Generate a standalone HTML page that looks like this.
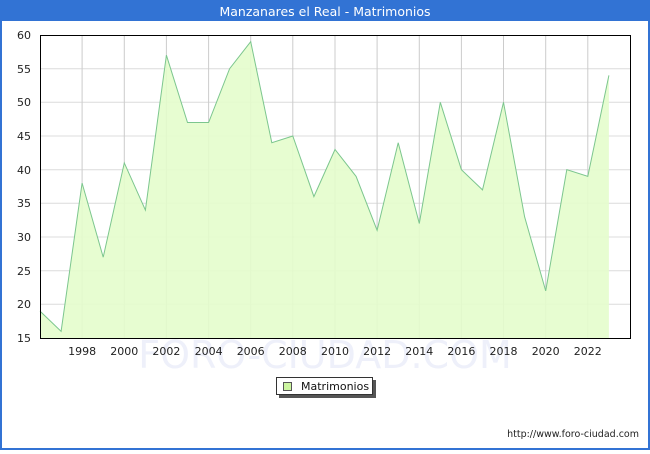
<!DOCTYPE html>
<html><head><style>
body{margin:0;width:650px;height:450px;overflow:hidden;font-family:"DejaVu Sans","Liberation Sans",sans-serif;}
</style></head><body>
<svg width="650" height="450" xmlns="http://www.w3.org/2000/svg" font-family="DejaVu Sans, Liberation Sans, sans-serif">
<rect x="0" y="0" width="650" height="450" fill="#3273d4"/>
<rect x="2" y="21" width="646" height="427" fill="#fff"/>
<text x="325" y="16" fill="#fff" font-size="12.5" text-anchor="middle">Manzanares el Real - Matrimonios</text>
<text x="325" y="368" fill="#eef0fa" font-size="38" text-anchor="middle">FORO-CIUDAD.COM</text>
<g stroke="#dcdcdc" stroke-width="1">
<line x1="40" x2="630" y1="68.7" y2="68.7"/><line x1="40" x2="630" y1="102.3" y2="102.3"/><line x1="40" x2="630" y1="136" y2="136"/><line x1="40" x2="630" y1="169.7" y2="169.7"/><line x1="40" x2="630" y1="203.3" y2="203.3"/><line x1="40" x2="630" y1="237" y2="237"/><line x1="40" x2="630" y1="270.7" y2="270.7"/><line x1="40" x2="630" y1="304.3" y2="304.3"/>
</g>
<g stroke="#cccccc" stroke-width="1">
<line x1="82.1" x2="82.1" y1="35" y2="338"/><line x1="124.3" x2="124.3" y1="35" y2="338"/><line x1="166.4" x2="166.4" y1="35" y2="338"/><line x1="208.6" x2="208.6" y1="35" y2="338"/><line x1="250.7" x2="250.7" y1="35" y2="338"/><line x1="292.8" x2="292.8" y1="35" y2="338"/><line x1="335" x2="335" y1="35" y2="338"/><line x1="377.1" x2="377.1" y1="35" y2="338"/><line x1="419.3" x2="419.3" y1="35" y2="338"/><line x1="461.4" x2="461.4" y1="35" y2="338"/><line x1="503.5" x2="503.5" y1="35" y2="338"/><line x1="545.7" x2="545.7" y1="35" y2="338"/><line x1="587.8" x2="587.8" y1="35" y2="338"/>
</g>
<polygon fill="#e4fdcc" fill-opacity="0.9" stroke="none" points="40,338 40,311.1 61.1,331.3 82.1,183.1 103.2,257.2 124.3,162.9 145.4,210.1 166.4,55.2 187.5,122.5 208.6,122.5 229.6,68.7 250.7,41.7 271.8,142.7 292.8,136 313.9,196.6 335,149.5 356.1,176.4 377.1,230.3 398.2,142.7 419.3,223.5 440.3,102.3 461.4,169.7 482.5,189.9 503.5,102.3 524.6,216.8 545.7,290.9 566.8,169.7 587.8,176.4 608.9,75.4 608.9,338"/>
<polyline fill="none" stroke="#7cc68e" stroke-width="1" points="40,311.1 61.1,331.3 82.1,183.1 103.2,257.2 124.3,162.9 145.4,210.1 166.4,55.2 187.5,122.5 208.6,122.5 229.6,68.7 250.7,41.7 271.8,142.7 292.8,136 313.9,196.6 335,149.5 356.1,176.4 377.1,230.3 398.2,142.7 419.3,223.5 440.3,102.3 461.4,169.7 482.5,189.9 503.5,102.3 524.6,216.8 545.7,290.9 566.8,169.7 587.8,176.4 608.9,75.4"/>
<rect x="40.5" y="35.5" width="590" height="303" fill="none" stroke="#000" stroke-width="1"/>
<g font-size="11" fill="#222" text-anchor="end">
<text x="31" y="39">60</text><text x="31" y="73">55</text><text x="31" y="106">50</text><text x="31" y="140">45</text><text x="31" y="174">40</text><text x="31" y="207">35</text><text x="31" y="241">30</text><text x="31" y="275">25</text><text x="31" y="308">20</text><text x="31" y="342">15</text>
</g>
<g font-size="11" fill="#222" text-anchor="middle">
<text x="82.1" y="355">1998</text><text x="124.3" y="355">2000</text><text x="166.4" y="355">2002</text><text x="208.6" y="355">2004</text><text x="250.7" y="355">2006</text><text x="292.8" y="355">2008</text><text x="335" y="355">2010</text><text x="377.1" y="355">2012</text><text x="419.3" y="355">2014</text><text x="461.4" y="355">2016</text><text x="503.5" y="355">2018</text><text x="545.7" y="355">2020</text><text x="587.8" y="355">2022</text>
</g>
<rect x="279" y="380" width="97" height="18" fill="#555"/>
<rect x="276.5" y="377.5" width="96" height="17" fill="#fff" stroke="#333"/>
<rect x="283.5" y="382.5" width="8" height="8" fill="#ccf5a0" stroke="#555"/>
<text x="301" y="390" font-size="11" fill="#111">Matrimonios</text>
<text x="639" y="437" font-size="9.5" fill="#222" text-anchor="end">http://www.foro-ciudad.com</text>
</svg>
</body></html>
